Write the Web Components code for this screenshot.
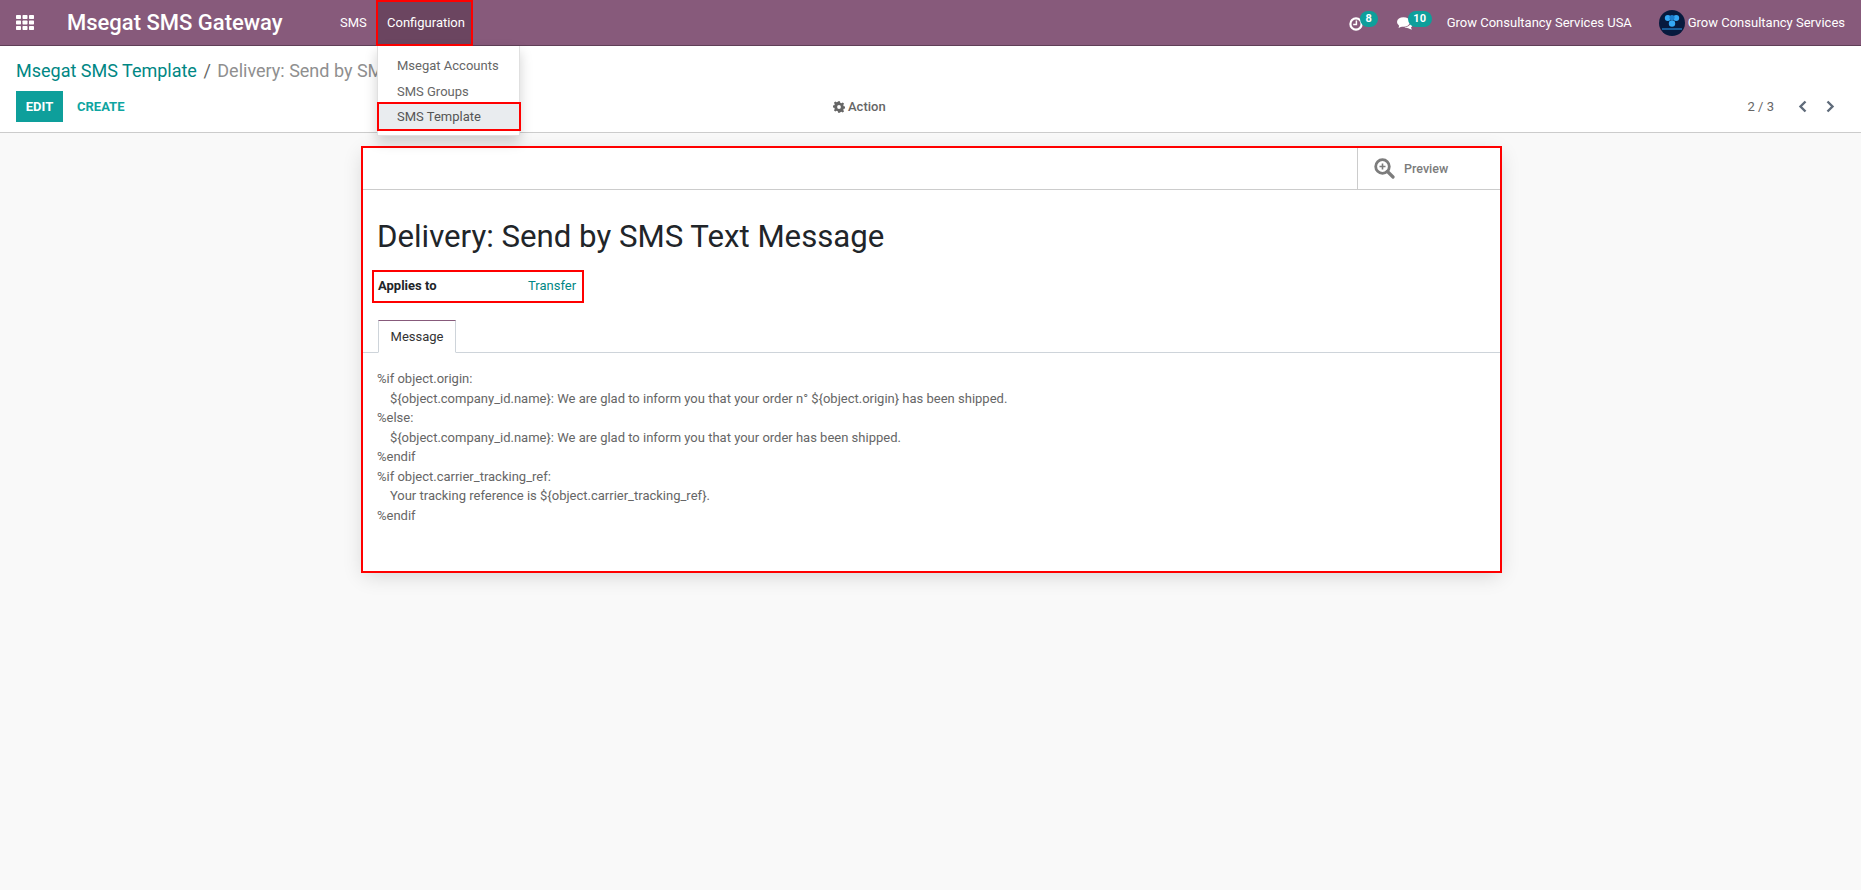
<!DOCTYPE html>
<html>
<head>
<meta charset="utf-8">
<title>Msegat SMS Template</title>
<style>
  html, body { margin: 0; height: 100%; }
  body {
    font: 13px/19.5px Roboto, "Liberation Sans", sans-serif;
    color: #666;
    background: #f9f9f9;
    display: flex;
    flex-direction: column;
    overflow: hidden;
  }
</style>
</head>
<body>
<app-navbar></app-navbar>
<control-panel></control-panel>
<form-view></form-view>

<script>
class AppNavbar extends HTMLElement {
  constructor() {
    super();
    this.attachShadow({ mode: "open" });
  }

  static get styles() {
    return /* css */`
      :host {
        display: flex;
        align-items: stretch;
        height: 45px;
        flex: none;
        background: #875a7b;
        border-bottom: 1px solid #5f3f57;
        color: #fff;
        position: relative;
        z-index: 5;
      }
      .grid { display: flex; align-items: center; margin-left: 16px; width: 51px; }
      .brand { font-size: 22px; font-weight: 500; line-height: 45px; width: 273px; white-space: nowrap; }
      .sms { width: 36px; line-height: 45px; flex: none; }
      .config {
        position: relative;
        box-sizing: border-box;
        width: 97px;
        height: 46px;
        border: 2px solid #f00;
        background: #6b4560;
        padding-left: 9px;
        line-height: 42px;
        flex: none;
      }
      .right { margin-left: auto; display: flex; align-items: center; padding-right: 16px; }
      .sys { position: relative; display: flex; align-items: center; }
      .badge {
        position: absolute;
        top: 11px;
        background: #0e9f9b;
        color: #fff;
        font-size: 11px;
        font-weight: 700;
        line-height: 16px;
        height: 16px;
        border-radius: 8px;
        text-align: center;
      }
      .clock { width: 48px; height: 45px; }
      .clock .badge { left: 11px; width: 18px; }
      .chat { width: 50px; height: 45px; }
      .chat .badge { left: 11px; width: 24px; }
      .company { width: 212px; white-space: nowrap; }
      .avatar { margin-right: 3px; display: block; flex: none; }
    `;
  }

  connectedCallback() {
    this.render();
  }

  render() {
    this.shadowRoot.innerHTML = /* html */`
    <style>${AppNavbar.styles}</style>
    <div class="grid">
      <svg width="18" height="15" viewBox="0 0 18 15" fill="#fff">
        <rect width="5" height="4" rx=".7"/><rect x="6.5" width="5" height="4" rx=".7"/><rect x="13" width="5" height="4" rx=".7"/>
        <rect y="5.5" width="5" height="4" rx=".7"/><rect x="6.5" y="5.5" width="5" height="4" rx=".7"/><rect x="13" y="5.5" width="5" height="4" rx=".7"/>
        <rect y="11" width="5" height="4" rx=".7"/><rect x="6.5" y="11" width="5" height="4" rx=".7"/><rect x="13" y="11" width="5" height="4" rx=".7"/>
      </svg>
    </div>
    <div class="brand">Msegat SMS Gateway</div>
    <div class="sms">SMS</div>
    <div class="config">Configuration<dropdown-menu></dropdown-menu></div>
    <div class="right">
      <div class="sys clock">
        <svg width="14" height="14" viewBox="0 0 14 14" fill="none" stroke="#fff" style="margin-top:3px"><circle cx="7" cy="7" r="5.6" stroke-width="2.2"/><path d="M7.4 3.6v3.8H4.2" stroke-width="1.5"/></svg>
        <span class="badge">8</span>
      </div>
      <div class="sys chat">
        <svg width="16" height="14" viewBox="0 0 16 14" fill="#fff" style="margin-top:3px"><ellipse cx="6.5" cy="5" rx="6.5" ry="4.8"/><path d="M2.5 7.5 1.5 11 6 9z"/><path d="M14 3.5c1.4 1 2 2.2 2 3.5 0 1.4-.8 2.500-2 3.300l.8 2.500-3.600-1.600c-1.400 0-2.800-.2-3.800-.9 3.600-.1 7-2.400 6.600-6.800z"/></svg>
        <span class="badge">10</span>
      </div>
      <div class="company">Grow Consultancy Services USA</div>
      <svg class="avatar" width="26" height="26" viewBox="0 0 26 26">
        <circle cx="13" cy="13" r="13" fill="#071a3e"/>
        <circle cx="8.8" cy="8" r="3" fill="#35a8f5"/>
        <circle cx="17.2" cy="8" r="3" fill="#35a8f5"/>
        <circle cx="13" cy="13.5" r="3.2" fill="#35a8f5"/>
        <circle cx="13" cy="7.5" r="2.6" fill="#1c7fd0"/>
        <path d="M3 19h20" stroke="#2a9df0"/>
      </svg>
      <span>Grow Consultancy Services</span>
    </div>`;
  }
}

class DropdownMenu extends HTMLElement {
  constructor() {
    super();
    this.attachShadow({ mode: "open" });
  }

  static get styles() {
    return /* css */`
      :host {
        position: absolute;
        top: 44px;
        left: -1px;
        width: 143px;
        height: 90px;
        box-sizing: border-box;
        padding-top: 7px;
        background: #fff;
        border: 1px solid rgba(0,0,0,.12);
        border-top: 0;
        box-shadow: 0 6px 12px rgba(0,0,0,.18);
        color: #666;
        z-index: 10;
      }
      .item { padding-left: 19px; height: 26px; line-height: 26px; white-space: nowrap; }
      .active {
        box-sizing: border-box;
        height: 29px;
        line-height: 25px;
        padding-left: 18px;
        margin: -3px -2px 0 -1px;
        position: relative;
        background: #e9ecef;
        border: 2px solid #f00;
        color: #555;
      }
    `;
  }

  connectedCallback() {
    this.shadowRoot.innerHTML = /* html */`
    <style>${DropdownMenu.styles}</style>
    <div class="item">Msegat Accounts</div>
    <div class="item">SMS Groups</div>
    <div class="item active">SMS Template</div>`;
  }
}

class ControlPanel extends HTMLElement {
  constructor() {
    super();
    this.attachShadow({ mode: "open" });
  }

  static get styles() {
    return /* css */`
      :host {
        display: block;
        flex: none;
        height: 86px;
        background: #fff;
        border-bottom: 1px solid #ccc;
        padding: 0 16px;
      }
      .crumbs { font-size: 18px; line-height: 27px; padding-top: 11px; height: 34px; white-space: nowrap; color: #8f8f8f; }
      .crumbs a { color: #008784; }
      .crumbs i { font-style: normal; color: #666; margin: 0 2px; }
      .row { display: grid; grid-template-columns: 817px auto 1fr; align-items: center; height: 31px; }
      .left { display: flex; align-items: center; }
      .edit {
        background: #0e9f9b;
        color: #fff;
        font-size: 13px;
        font-weight: 700;
        width: 47px;
        height: 31px;
        line-height: 31px;
        text-align: center;
      }
      .create { color: #0ea5a1; font-size: 13px; font-weight: 700; margin-left: 14px; }
      .action { color: #666; font-weight: 500; display: flex; align-items: center; gap: 3px; }
      .pager { display: flex; justify-content: flex-end; align-items: center; color: #666; }
      .pager svg { display: block; }
      .pager .prev { margin-left: 24px; }
      .pager .next { margin-left: 19px; margin-right: 10px; }
    `;
  }

  connectedCallback() {
    this.shadowRoot.innerHTML = /* html */`
    <style>${ControlPanel.styles}</style>
    <div class="crumbs"><a>Msegat SMS Template</a><i> / </i><span>Delivery: Send by SMS Text Message</span></div>
    <div class="row">
      <div class="left"><div class="edit">EDIT</div><div class="create">CREATE</div></div>
      <div class="action">
        <svg width="12" height="12" viewBox="0 0 12 12" fill="#666"><path d="M5 0h2l.3 1.600 1.200.5L9.900 1.200l1.400 1.400-.9 1.400.5 1.200 1.600.3v2l-1.600.3-.5 1.200.9 1.400-1.400 1.400-1.400-.9-1.200.5L7 12H5l-.3-1.600-1.200-.5-1.400.9L.7 9.400l.9-1.400-.5-1.200L-.5 6.500v-2l1.600-.3.5-1.200-.9-1.400L2.100 .2l1.400.9 1.200-.5z" transform="translate(.25 .25) scale(.96)"/><circle cx="6" cy="6" r="1.900" fill="#fff"/></svg>
        <span>Action</span>
      </div>
      <div class="pager">
        <span>2 / 3</span>
        <svg class="prev" width="9" height="13" viewBox="0 0 9 13" fill="none" stroke="#5f6b7a" stroke-width="2.400"><path d="M7.500 1.500 2.500 6.500l5 5"/></svg>
        <svg class="next" width="9" height="13" viewBox="0 0 9 13" fill="none" stroke="#5f6b7a" stroke-width="2.400"><path d="M1.500 1.500l5 5-5 5"/></svg>
      </div>
    </div>`;
  }
}

class FormView extends HTMLElement {
  constructor() {
    super();
    this.attachShadow({ mode: "open" });
  }

  static get styles() {
    return /* css */`
      :host { display: block; flex: 1; padding-top: 13px; }
      .sheet {
        box-sizing: border-box;
        width: 1141px;
        height: 427px;
        margin-left: 361px;
        background: #fff;
        border: 2px solid #f00;
        box-shadow: 0 5px 20px -3px rgba(0,0,0,.16);
      }
      .buttons { height: 41px; border-bottom: 1px solid #ccc; display: flex; justify-content: flex-end; }
      .preview {
        box-sizing: border-box;
        width: 143px;
        border-left: 1px solid #ccc;
        display: flex;
        align-items: center;
        padding-left: 16px;
        color: #7c7c7c;
        font-size: 12.5px;
        font-weight: 500;
        gap: 9px;
      }
      .preview svg { display: block; }
      .body { padding: 0 14px; }
      h1 { margin: 0; padding-top: 29px; font-size: 31.2px; line-height: 36px; font-weight: 400; color: #212529; }
      .field {
        box-sizing: border-box;
        display: flex;
        width: 212px;
        height: 33px;
        margin: 15px 0 0 -5px;
        border: 2px solid #f00;
        padding: 0 0 2px 4px;
        align-items: center;
        white-space: nowrap;
      }
      .field b { color: #212529; font-weight: 700; width: 150px; }
      .field a { color: #008784; }
      .tabs { height: 32px; margin-top: 17px; border-bottom: 1px solid #ced4da; padding-left: 15px; }
      .tab {
        box-sizing: border-box;
        width: 78px;
        height: 33px;
        border: 1px solid #ced4da;
        border-top-color: #875a7b;
        border-bottom-color: #fff;
        background: #fff;
        color: #333;
        text-align: center;
        line-height: 31px;
      }
      .msg { padding: 16px 14px 0; color: #666; }
      .msg div { height: 19.5px; white-space: pre; }
    `;
  }

  connectedCallback() {
    this.shadowRoot.innerHTML = /* html */`
    <style>${FormView.styles}</style>
    <div class="sheet">
      <div class="buttons">
        <div class="preview">
          <svg width="21" height="21" viewBox="0 0 21 21" fill="none" stroke="#7c7c7c"><circle cx="8.500" cy="8.500" r="6.800" stroke-width="2.800"/><path d="M13.500 13.500l5.500 5.500" stroke-width="3.200" stroke-linecap="round"/><path d="M8.500 5.500v6M5.500 8.500h6" stroke-width="1.600"/></svg>
          <span>Preview</span>
        </div>
      </div>
      <div class="body">
        <h1>Delivery: Send by SMS Text Message</h1>
        <div class="field"><b>Applies to</b><a>Transfer</a></div>
      </div>
      <div class="tabs"><div class="tab">Message</div></div>
      <div class="msg">
        <div>%if object.origin:</div>
        <div>    \${object.company_id.name}: We are glad to inform you that your order n° \${object.origin} has been shipped.</div>
        <div>%else:</div>
        <div>    \${object.company_id.name}: We are glad to inform you that your order has been shipped.</div>
        <div>%endif</div>
        <div>%if object.carrier_tracking_ref:</div>
        <div>    Your tracking reference is \${object.carrier_tracking_ref}.</div>
        <div>%endif</div>
      </div>
    </div>`;
  }
}

customElements.define("dropdown-menu", DropdownMenu);
customElements.define("app-navbar", AppNavbar);
customElements.define("control-panel", ControlPanel);
customElements.define("form-view", FormView);
</script>
</body>
</html>
